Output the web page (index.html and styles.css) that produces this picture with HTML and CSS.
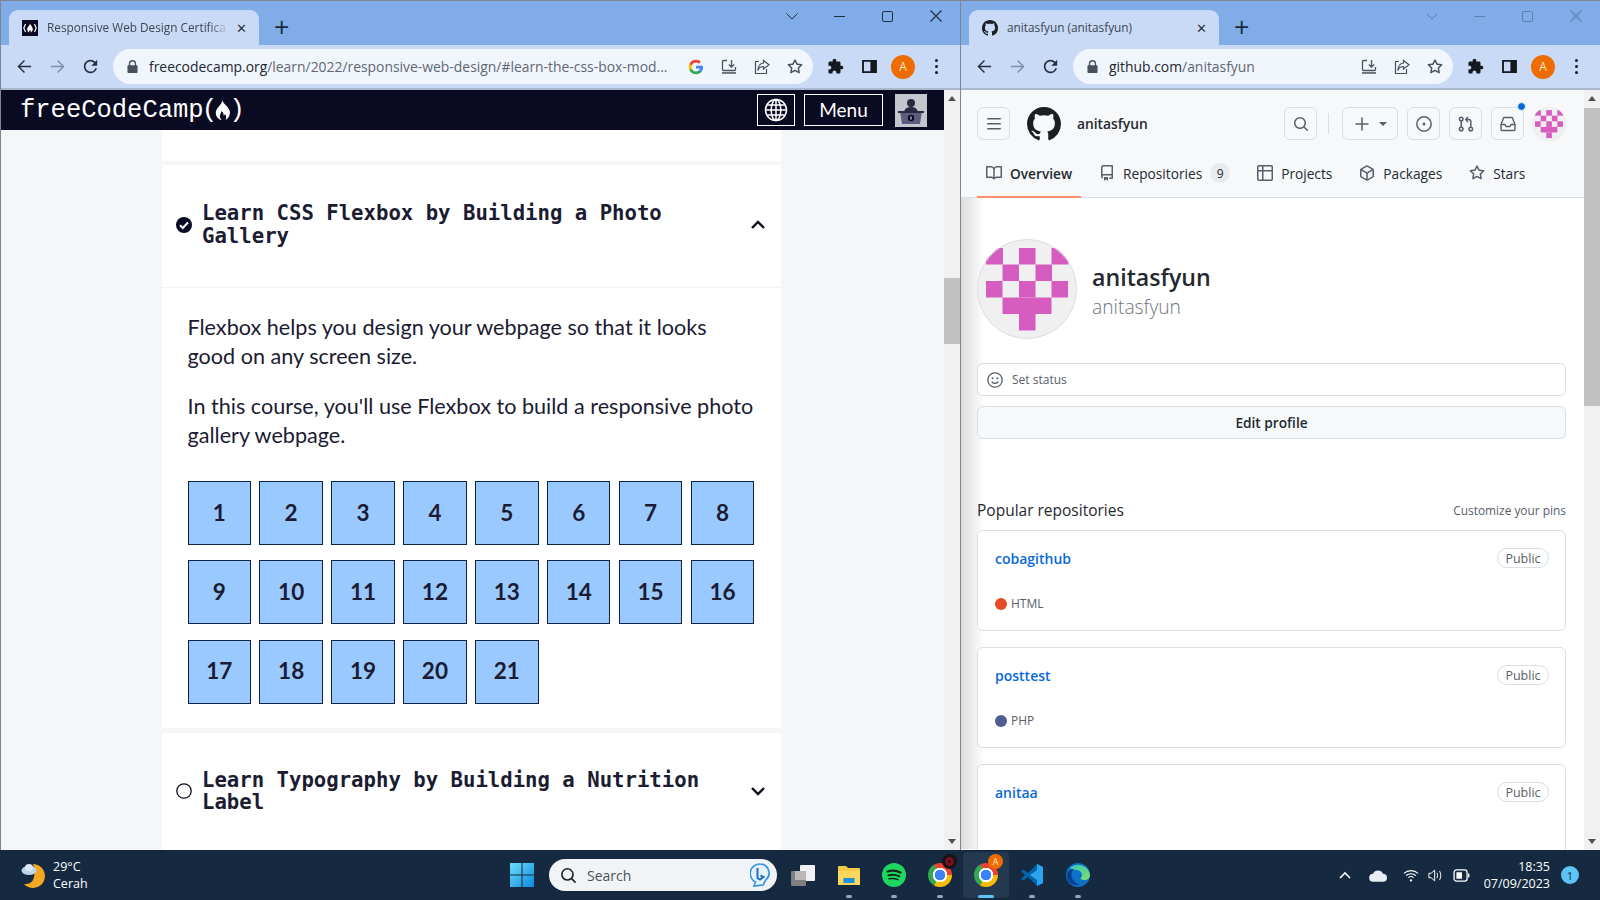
FILE: index.html
```html
<!DOCTYPE html>
<html>
<head>
    <title>Two browser windows</title>
    <link rel="stylesheet" href="styles.css">
</head>
<body>
    <!-- shared icons -->
    <svg class="sprites">
        <symbol id="i-github" viewBox="0 0 16 16"><path fill="currentColor" d="M8 0c4.42 0 8 3.58 8 8a8.013 8.013 0 0 1-5.45 7.59c-.4.08-.55-.17-.55-.38 0-.27.01-1.13.01-2.2 0-.75-.25-1.23-.54-1.48 1.78-.2 3.65-.88 3.65-3.95 0-.88-.31-1.59-.82-2.15.08-.2.36-1.02-.08-2.12 0 0-.67-.22-2.2.82-.64-.18-1.32-.27-2-.27-.68 0-1.36.09-2 .27-1.53-1.03-2.2-.82-2.2-.82-.44 1.1-.16 1.92-.08 2.12-.51.56-.82 1.28-.82 2.15 0 3.06 1.86 3.75 3.64 3.95-.23.2-.44.55-.51 1.07-.46.21-1.61.55-2.33-.66-.15-.24-.6-.83-1.23-.82-.67.01-.27.38.01.53.34.19.73.9.82 1.13.16.45.68 1.31 2.69.94 0 .67.01 1.3.01 1.49 0 .21-.15.45-.55.38A7.995 7.995 0 0 1 0 8c0-4.42 3.58-8 8-8Z"/></symbol>
        <symbol id="i-book" viewBox="0 0 16 16"><path fill="currentColor" d="M0 1.75A.75.75 0 0 1 .75 1h4.253c1.227 0 2.317.59 3 1.501A3.743 3.743 0 0 1 11.006 1h4.245a.75.75 0 0 1 .75.75v10.5a.75.75 0 0 1-.75.75h-4.507a2.25 2.25 0 0 0-1.591.659l-.622.621a.75.75 0 0 1-1.06 0l-.622-.621A2.25 2.25 0 0 0 5.258 13H.75a.75.75 0 0 1-.75-.75Zm7.251 10.324.004-5.073-.002-2.253A2.25 2.25 0 0 0 5.003 2.5H1.5v9h3.757a3.75 3.75 0 0 1 1.994.574ZM8.755 4.75l-.004 7.322a3.752 3.752 0 0 1 1.992-.572H14.5v-9h-3.495a2.25 2.25 0 0 0-2.25 2.25Z"/></symbol>
        <symbol id="i-repo" viewBox="0 0 16 16"><path fill="currentColor" d="M2 2.5A2.5 2.5 0 0 1 4.5 0h8.75a.75.75 0 0 1 .75.75v12.5a.75.75 0 0 1-.75.75h-2.5a.75.75 0 0 1 0-1.5h1.75v-2h-8a1 1 0 0 0-.714 1.7.75.75 0 1 1-1.072 1.05A2.495 2.495 0 0 1 2 11.5Zm10.5-1h-8a1 1 0 0 0-1 1v6.708A2.486 2.486 0 0 1 4.5 9h8ZM5 12.25a.25.25 0 0 1 .25-.25h3.5a.25.25 0 0 1 .25.25v3.25a.25.25 0 0 1-.4.2l-1.45-1.087a.249.249 0 0 0-.3 0L5.4 15.7a.25.25 0 0 1-.4-.2Z"/></symbol>
        <symbol id="i-table" viewBox="0 0 16 16"><path fill="currentColor" d="M0 1.75C0 .784.784 0 1.75 0h12.5C15.216 0 16 .784 16 1.75v12.5A1.75 1.75 0 0 1 14.25 16H1.75A1.75 1.75 0 0 1 0 14.25ZM6.5 6.5v8h7.75a.25.25 0 0 0 .25-.25V6.5Zm8-1.5V1.75a.25.25 0 0 0-.25-.25H6.5V5Zm-13 1.5v7.75c0 .138.112.25.25.25H5v-8ZM5 5V1.5H1.75a.25.25 0 0 0-.25.25V5Z"/></symbol>
        <symbol id="i-package" viewBox="0 0 16 16"><path fill="currentColor" d="m8.878.392 5.25 3.045c.54.314.872.89.872 1.514v6.098a1.75 1.75 0 0 1-.872 1.514l-5.25 3.045a1.75 1.75 0 0 1-1.756 0l-5.25-3.045A1.75 1.75 0 0 1 1 11.049V4.951c0-.624.332-1.201.872-1.514L7.122.392a1.75 1.75 0 0 1 1.756 0ZM7.875 1.69l-4.63 2.685L8 7.133l4.755-2.758-4.63-2.685a.248.248 0 0 0-.25 0ZM2.5 5.677v5.372c0 .09.047.171.125.216l4.625 2.683V8.432Zm6.25 8.271 4.625-2.683a.25.25 0 0 0 .125-.216V5.677L8.75 8.432Z"/></symbol>
        <symbol id="i-star" viewBox="0 0 16 16"><path fill="currentColor" d="M8 .25a.75.75 0 0 1 .673.418l1.882 3.815 4.21.612a.75.75 0 0 1 .416 1.279l-3.046 2.97.719 4.192a.751.751 0 0 1-1.088.791L8 12.347l-3.766 1.98a.75.75 0 0 1-1.088-.79l.72-4.194L.818 6.374a.75.75 0 0 1 .416-1.28l4.21-.611L7.327.668A.75.75 0 0 1 8 .25Zm0 2.445L6.615 5.5a.75.75 0 0 1-.564.41l-3.097.45 2.24 2.184a.75.75 0 0 1 .216.664l-.528 3.084 2.769-1.456a.75.75 0 0 1 .698 0l2.77 1.456-.53-3.084a.75.75 0 0 1 .216-.664l2.24-2.183-3.096-.45a.75.75 0 0 1-.564-.41L8 2.694Z"/></symbol>
        <symbol id="i-search" viewBox="0 0 16 16"><path fill="currentColor" d="M10.68 11.74a6 6 0 0 1-7.922-8.982 6 6 0 0 1 8.982 7.922l3.04 3.04a.749.749 0 0 1-.326 1.275.749.749 0 0 1-.734-.215ZM11.5 7a4.499 4.499 0 1 0-8.997 0A4.499 4.499 0 0 0 11.5 7Z"/></symbol>
        <symbol id="i-bars" viewBox="0 0 16 16"><path fill="currentColor" d="M1 2.75A.75.75 0 0 1 1.75 2h12.5a.75.75 0 0 1 0 1.5H1.75A.75.75 0 0 1 1 2.75Zm0 5A.75.75 0 0 1 1.75 7h12.5a.75.75 0 0 1 0 1.5H1.75A.75.75 0 0 1 1 7.75ZM1.75 12h12.5a.75.75 0 0 1 0 1.5H1.75a.75.75 0 0 1 0-1.5Z"/></symbol>
        <symbol id="i-issue" viewBox="0 0 16 16"><circle cx="8" cy="8" r="7.2" fill="none" stroke="currentColor" stroke-width="1.5"/><circle cx="8" cy="8" r="1.5" fill="currentColor"/></symbol>
        <symbol id="i-pr" viewBox="0 0 16 16"><g fill="none" stroke="currentColor" stroke-width="1.5"><circle cx="3.2" cy="3" r="1.8"/><circle cx="3.2" cy="13" r="1.8"/><circle cx="12.8" cy="13" r="1.8"/><path d="M3.2 5v6M12.8 11V5.5A2 2 0 0 0 10.8 3.5H8M10 1 7.8 3.5 10 6"/></g></symbol>
        <symbol id="i-inbox" viewBox="0 0 16 16"><g fill="none" stroke="currentColor" stroke-width="1.4" stroke-linejoin="round"><path d="M3.8 1.5h8.4L15 8.5v5a1 1 0 0 1-1 1H2a1 1 0 0 1-1-1v-5Z"/><path d="M1 8.5h4l1 2h4l1-2h4"/></g></symbol>
        <symbol id="i-smile" viewBox="0 0 16 16"><g fill="none" stroke="currentColor" stroke-width="1.3"><circle cx="8" cy="8" r="7.2"/><path d="M5 10c.8 1 1.8 1.400 3 1.400s2.200-.4 3-1.400" stroke-linecap="round"/></g><circle cx="5.6" cy="6.2" r="1" fill="currentColor"/><circle cx="10.4" cy="6.2" r="1" fill="currentColor"/></symbol>
        <symbol id="i-back" viewBox="0 0 16 16"><path fill="none" stroke="currentColor" stroke-width="1.5" d="M15 8H1.5M8 1.5 1.500 8 8 14.5"/></symbol>
        <symbol id="i-forward" viewBox="0 0 16 16"><path fill="none" stroke="currentColor" stroke-width="1.5" d="M1 8h13.500M8 1.500 14.500 8 8 14.500"/></symbol>
        <symbol id="i-reload" viewBox="3 3 18 18"><path fill="currentColor" d="M17.65 6.35A7.958 7.958 0 0 0 12 4c-4.42 0-7.99 3.58-7.99 8s3.57 8 7.99 8c3.730 0 6.840-2.550 7.730-6h-2.080A5.990 5.990 0 0 1 12 18c-3.310 0-6-2.690-6-6s2.690-6 6-6c1.660 0 3.140.69 4.220 1.780L13 11h7V4l-2.350 2.350z"/></symbol>
        <symbol id="i-lock" viewBox="0 0 12 14"><path fill="currentColor" d="M2 5.500V4a4 4 0 0 1 8 0v1.500h.5a1 1 0 0 1 1 1V13a1 1 0 0 1-1 1h-9a1 1 0 0 1-1-1V6.500a1 1 0 0 1 1-1Zm1.500 0h5V4a2.500 2.500 0 0 0-5 0Z"/></symbol>
        <symbol id="i-google" viewBox="0 0 24 24"><path fill="#4285F4" d="M22.56 12.25c0-.78-.07-1.53-.2-2.25H12v4.26h5.92c-.26 1.37-1.04 2.53-2.21 3.31v2.77h3.57c2.08-1.92 3.28-4.74 3.28-8.09z"/><path fill="#34A853" d="M12 23c2.97 0 5.46-.98 7.28-2.66l-3.57-2.77c-.98.66-2.23 1.06-3.71 1.06-2.86 0-5.29-1.93-6.16-4.53H2.18v2.84C3.99 20.53 7.7 23 12 23z"/><path fill="#FBBC05" d="M5.84 14.09c-.22-.66-.35-1.36-.35-2.09s.13-1.43.35-2.09V7.07H2.18C1.43 8.55 1 10.22 1 12s.43 3.45 1.18 4.93l2.85-2.22.81-.62z"/><path fill="#EA4335" d="M12 5.38c1.62 0 3.06.56 4.21 1.64l3.15-3.15C17.45 2.09 14.97 1 12 1 7.7 1 3.99 3.47 2.18 7.07l3.66 2.84c.87-2.6 3.3-4.53 6.16-4.53z"/></symbol>
        <symbol id="i-install" viewBox="0 0 16 16"><g fill="none" stroke="currentColor" stroke-width="1.3"><path d="M6 1.500H2.500a1 1 0 0 0-1 1v8a1 1 0 0 0 1 1h11a1 1 0 0 0 1-1V8M10.500 1v7M7.800 5.500l2.700 2.700 2.700-2.700"/></g><rect x="1" y="13.2" width="14" height="1.5" fill="currentColor"/></symbol>
        <symbol id="i-share" viewBox="0 0 16 16"><path fill="none" stroke="currentColor" stroke-width="1.2" d="M5 2.500H1.500v12h11V10M9.500 1.500 15 5.800l-5.500 4.200V7.500C6.500 7.500 4.800 9 3.800 11.500 4 7.500 6 4.500 9.500 4Z"/></symbol>
        <symbol id="i-puzzle" viewBox="0 0 24 24"><path fill="currentColor" d="M20.5 11H19V7c0-1.100-.9-2-2-2h-4V3.500C13 2.120 11.880 1 10.500 1S8 2.120 8 3.500V5H4c-1.100 0-1.990.9-1.990 2v3.800H3.500c1.490 0 2.700 1.210 2.700 2.700s-1.210 2.700-2.700 2.700H2V20c0 1.100.9 2 2 2h3.800v-1.500c0-1.490 1.210-2.700 2.700-2.700 1.490 0 2.700 1.210 2.700 2.700V22H17c1.100 0 2-.9 2-2v-4h1.500c1.380 0 2.500-1.120 2.500-2.500S21.880 11 20.500 11z"/></symbol>
        <symbol id="i-sidebar" viewBox="0 0 16 14"><path fill="currentColor" d="M0 0h16v14H0Zm2 2v10h7V2Z" fill-rule="evenodd"/></symbol>
        <symbol id="i-flame" viewBox="0 0 20 26"><path fill="currentColor" d="M9 0c1 5 8 8 9.500 14 .8 4-1.500 9-5.500 11 1.500-2.500 1.200-5.500-.5-7.500-.3 1.500-1 2-1.800 2.200.5-2.500-.7-5-2.700-6.200.3 2.500-3 5-1.500 8.500.4 1 1 2 1.800 3C3.500 24 .8 20 1 15.500 1.300 9.500 8.500 7 9 0Z"/></symbol>
        <symbol id="i-fcc" viewBox="0 0 16 16"><rect width="16" height="16" fill="#0a0a23"/><path fill="none" stroke="#fff" stroke-width="1.2" d="M3.500 4 1.800 8l1.700 4M12.500 4l1.700 4-1.700 4"/><path fill="#fff" d="M8 3.500c.4 2 2.800 3 2.800 5.700 0 1.500-1 2.800-2.300 3.300.5-1 .3-2-.5-2.800-.1 1-1.400 1.600-.8 2.800-1.300-.5-2-1.900-2-3.200 0-2.800 2.600-3.300 2.800-5.800Z"/></symbol>
    </svg>

    <div class="desktop">
        <!-- left browser window -->
        <section class="window window-left">
            <div class="tabstrip">
                <div class="tab">
                    <svg class="tab-favicon"><use href="#i-fcc"/></svg>
                    <span class="tab-title tab-title-fade">Responsive Web Design Certifica</span>
                    <span class="tab-close">&#10005;</span>
                </div>
                <span class="tab-new">+</span>
                <div class="window-controls">
                    <svg class="wc-caret" viewBox="0 0 12 7"><path d="M.5.5 6 6 11.500.5" fill="none" stroke="currentColor"/></svg>
                    <span class="wc-min"></span>
                    <span class="wc-max"></span>
                    <svg class="wc-close" viewBox="0 0 12 12"><path d="M.5.5l11 11M11.500.5l-11 11" fill="none" stroke="currentColor" stroke-width="1.1"/></svg>
                </div>
            </div>
            <div class="toolbar">
                <svg class="nav-icon"><use href="#i-back"/></svg>
                <svg class="nav-icon nav-off"><use href="#i-forward"/></svg>
                <svg class="nav-icon"><use href="#i-reload"/></svg>
                <div class="omnibox">
                    <svg class="omni-lock"><use href="#i-lock"/></svg>
                    <span class="omni-url"><b>freecodecamp.org</b>/learn/2022/responsive-web-design/#learn-the-css-box-mod...</span>
                    <svg class="omni-icon"><use href="#i-google"/></svg>
                    <svg class="omni-icon"><use href="#i-install"/></svg>
                    <svg class="omni-icon"><use href="#i-share"/></svg>
                    <svg class="omni-icon"><use href="#i-star"/></svg>
                </div>
                <svg class="ext-icon"><use href="#i-puzzle"/></svg>
                <svg class="side-icon"><use href="#i-sidebar"/></svg>
                <span class="chrome-avatar">A</span>
                <span class="chrome-dots"><i></i><i></i><i></i></span>
            </div>
            <div class="viewport">
                <div class="fcc-page">
                    <header class="fcc-header">
                        <div class="fcc-logo">freeCodeCamp<span class="fcc-paren">(</span><svg class="fcc-flame"><use href="#i-flame"/></svg><span class="fcc-paren">)</span></div>
                        <button class="fcc-globe">
                            <svg viewBox="0 0 24 24"><g fill="none" stroke="#fff" stroke-width="1.5"><circle cx="12" cy="12" r="10.500"/><ellipse cx="12" cy="12" rx="4.800" ry="10.500"/><path d="M12 1.500v21M1.500 12h21M3 7h18M3 17h18"/></g></svg>
                        </button>
                        <button class="fcc-menu">Menu</button>
                        <div class="fcc-user">
                            <svg viewBox="0 0 32 33"><rect width="32" height="33" fill="#c5c5cd"/><circle cx="16" cy="9" r="4" fill="#2a2a40"/><path d="M9 19c0-4 3-6 7-6s7 2 7 6Z" fill="#2a2a40"/><path d="M5 17h22l-2 13H7Z" fill="#5c5c80"/><rect x="3" y="17" width="26" height="2" fill="#2a2a40"/><circle cx="16" cy="24" r="3.200" fill="#0a0a23"/><path d="M16 22.500v3" stroke="#fff"/></svg>
                        </div>
                    </header>
                    <main class="fcc-main">
                        <div class="block-stub"></div>
                        <div class="block">
                            <div class="block-head">
                                <svg class="block-check" viewBox="0 0 16 16"><circle cx="8" cy="8" r="8" fill="#0a0a23"/><path d="M4 8.300l2.800 2.700L12 5.500" fill="none" stroke="#fff" stroke-width="2"/></svg>
                                <h3 class="block-title">Learn CSS Flexbox by Building a Photo Gallery</h3>
                                <svg class="block-chevron" viewBox="0 0 14 9"><path d="M1 8l6-6 6 6" fill="none" stroke="#0a0a23" stroke-width="2.400"/></svg>
                            </div>
                            <div class="block-body">
                                <p>Flexbox helps you design your webpage so that it looks good on any screen size.</p>
                                <p>In this course, you'll use Flexbox to build a responsive photo gallery webpage.</p>
                                <div class="step-grid">
                                    <a class="step">1</a><a class="step">2</a><a class="step">3</a><a class="step">4</a><a class="step">5</a><a class="step">6</a><a class="step">7</a><a class="step">8</a>
                                    <a class="step">9</a><a class="step">10</a><a class="step">11</a><a class="step">12</a><a class="step">13</a><a class="step">14</a><a class="step">15</a><a class="step">16</a>
                                    <a class="step">17</a><a class="step">18</a><a class="step">19</a><a class="step">20</a><a class="step">21</a>
                                </div>
                            </div>
                        </div>
                        <div class="block">
                            <div class="block-head block-head-next">
                                <svg class="block-check" viewBox="0 0 16 16"><circle cx="8" cy="8" r="7.200" fill="none" stroke="#0a0a23" stroke-width="1.300"/></svg>
                                <h3 class="block-title">Learn Typography by Building a Nutrition Label</h3>
                                <svg class="block-chevron" viewBox="0 0 14 9"><path d="M1 1l6 6 6-6" fill="none" stroke="#0a0a23" stroke-width="2.400"/></svg>
                            </div>
                        </div>
                    </main>
                </div>
                <div class="scrollbar">
                    <span class="sb-up"></span>
                    <span class="sb-thumb sb-thumb-left"></span>
                    <span class="sb-down"></span>
                </div>
            </div>
        </section>

        <!-- right browser window -->
        <section class="window window-right">
            <div class="tabstrip">
                <div class="tab">
                    <svg class="tab-favicon tab-favicon-gh"><use href="#i-github"/></svg>
                    <span class="tab-title">anitasfyun (anitasfyun)</span>
                    <span class="tab-close">&#10005;</span>
                </div>
                <span class="tab-new">+</span>
                <div class="window-controls window-controls-off">
                    <svg class="wc-caret" viewBox="0 0 12 7"><path d="M.5.5 6 6 11.500.5" fill="none" stroke="currentColor"/></svg>
                    <span class="wc-min"></span>
                    <span class="wc-max"></span>
                    <svg class="wc-close" viewBox="0 0 12 12"><path d="M.5.5l11 11M11.500.5l-11 11" fill="none" stroke="currentColor" stroke-width="1.1"/></svg>
                </div>
            </div>
            <div class="toolbar">
                <svg class="nav-icon"><use href="#i-back"/></svg>
                <svg class="nav-icon nav-off"><use href="#i-forward"/></svg>
                <svg class="nav-icon"><use href="#i-reload"/></svg>
                <div class="omnibox">
                    <svg class="omni-lock"><use href="#i-lock"/></svg>
                    <span class="omni-url"><b>github.com</b>/anitasfyun</span>
                    <svg class="omni-icon"><use href="#i-install"/></svg>
                    <svg class="omni-icon"><use href="#i-share"/></svg>
                    <svg class="omni-icon"><use href="#i-star"/></svg>
                </div>
                <svg class="ext-icon"><use href="#i-puzzle"/></svg>
                <svg class="side-icon"><use href="#i-sidebar"/></svg>
                <span class="chrome-avatar">A</span>
                <span class="chrome-dots"><i></i><i></i><i></i></span>
            </div>
            <div class="viewport">
                <div class="gh-page">
                    <header class="gh-top">
                        <div class="gh-bar">
                            <span class="gh-btn gh-btn-first"><svg><use href="#i-bars"/></svg></span>
                            <svg class="gh-mark"><use href="#i-github"/></svg>
                            <span class="gh-crumb">anitasfyun</span>
                            <span class="gh-btn gh-btn-search"><svg><use href="#i-search"/></svg></span>
                            <span class="gh-sep"></span>
                            <span class="gh-btn gh-btn-plus">
                                <svg viewBox="0 0 16 16"><path d="M8 1.500v13M1.500 8h13" stroke="currentColor" stroke-width="1.5"/></svg>
                                <i class="gh-caret"></i>
                            </span>
                            <span class="gh-btn"><svg><use href="#i-issue"/></svg></span>
                            <span class="gh-btn"><svg><use href="#i-pr"/></svg></span>
                            <span class="gh-btn gh-btn-inbox"><svg><use href="#i-inbox"/></svg><i class="gh-unread"></i></span>
                            <svg class="gh-mini-avatar" viewBox="0 0 100 100"><use href="#avatar-art"/></svg>
                        </div>
                        <nav class="gh-nav">
                            <a class="gh-tab gh-tab-on"><svg><use href="#i-book"/></svg>Overview</a>
                            <a class="gh-tab"><svg><use href="#i-repo"/></svg>Repositories<span class="gh-count">9</span></a>
                            <a class="gh-tab"><svg><use href="#i-table"/></svg>Projects</a>
                            <a class="gh-tab"><svg><use href="#i-package"/></svg>Packages</a>
                            <a class="gh-tab"><svg><use href="#i-star"/></svg>Stars</a>
                        </nav>
                    </header>
                    <div class="gh-body">
                        <div class="gh-profile">
                            <svg class="gh-avatar" viewBox="0 0 100 100">
                                <g id="avatar-art">
                                    <clipPath id="avatar-clip"><circle cx="50" cy="50" r="50"/></clipPath>
                                    <circle cx="50" cy="50" r="49.5" fill="#f0f0f0"/>
                                    <g clip-path="url(#avatar-clip)" fill="#d65cbf">
                                        <rect x="9" y="9" width="17" height="16.5"/><rect x="42" y="9" width="16.5" height="16.5"/><rect x="74.500" y="9" width="17" height="16.5"/>
                                        <rect x="25.500" y="25.500" width="16.5" height="16.5"/><rect x="58.500" y="25.500" width="16.5" height="16.5"/>
                                        <rect x="9" y="42" width="16.5" height="16.5"/><rect x="42" y="42" width="16.5" height="16.5"/><rect x="74.500" y="42" width="16.5" height="16.5"/>
                                        <rect x="25.500" y="58.500" width="49" height="16.5"/>
                                        <rect x="42" y="75" width="16.5" height="16.5"/>
                                    </g>
                                    <circle cx="50" cy="50" r="49.5" fill="none" stroke="#d8dee4"/>
                                </g>
                            </svg>
                            <div class="gh-names">
                                <div class="gh-name">anitasfyun</div>
                                <div class="gh-login">anitasfyun</div>
                            </div>
                        </div>
                        <div class="gh-status"><svg><use href="#i-smile"/></svg>Set status</div>
                        <div class="gh-edit">Edit profile</div>
                        <div class="gh-pop-head">
                            <h2>Popular repositories</h2>
                            <a>Customize your pins</a>
                        </div>
                        <div class="repo-list">
                            <div class="repo">
                                <div class="repo-top"><a class="repo-name">cobagithub</a><span class="repo-pill">Public</span></div>
                                <div class="repo-lang"><i class="lang-dot lang-html"></i>HTML</div>
                            </div>
                            <div class="repo">
                                <div class="repo-top"><a class="repo-name">posttest</a><span class="repo-pill">Public</span></div>
                                <div class="repo-lang"><i class="lang-dot lang-php"></i>PHP</div>
                            </div>
                            <div class="repo">
                                <div class="repo-top"><a class="repo-name">anitaa</a><span class="repo-pill">Public</span></div>
                            </div>
                        </div>
                    </div>
                </div>
                <div class="scrollbar">
                    <span class="sb-up"></span>
                    <span class="sb-thumb sb-thumb-right"></span>
                    <span class="sb-down"></span>
                </div>
            </div>
        </section>
    </div>

    <!-- taskbar -->
    <footer class="taskbar">
        <div class="tb-weather">
            <svg viewBox="0 0 24 26"><path d="M12 2a12 12 0 1 1-9 20c8 1 13-5 9-20Z" fill="#f5a623"/><ellipse cx="8" cy="8.500" rx="7.500" ry="4.500" fill="#b9d4ee"/><ellipse cx="8" cy="5.500" rx="4" ry="3.500" fill="#dbe9f7"/></svg>
            <div class="tb-weather-text"><span>29°C</span><span>Cerah</span></div>
        </div>
        <svg class="tb-win" viewBox="0 0 24 24">
            <defs><linearGradient id="win-g" x1="0" y1="0" x2="1" y2="1"><stop offset="0" stop-color="#6ce0fb"/><stop offset="1" stop-color="#0f86dd"/></linearGradient></defs>
            <path fill="url(#win-g)" d="M0 0h11.500v11.500H0Zm12.500 0H24v11.500H12.500ZM0 12.500h11.500V24H0Zm12.500 0H24V24H12.500Z"/>
        </svg>
        <div class="tb-search">
            <svg class="tb-search-q" viewBox="0 0 16 16"><use href="#i-search"/></svg>
            <span>Search</span>
            <svg class="tb-bing" viewBox="0 0 20 24"><path d="M10 1a9 9 0 0 1 6 15.700L13 22l-9 1 1.500-4A9.500 9.500 0 0 1 10 1Z" fill="#e6f2fc" stroke="#2f8fe0" stroke-width="1.6"/><path d="M7.500 5v10l2.500 1.500 3.500-2.500-3-1.500" fill="none" stroke="#1d6fc4" stroke-width="2"/></svg>
        </div>
        <div class="tb-apps">
            <span class="tb-app">
                <svg viewBox="0 0 24 24"><rect x="9" y="2" width="15" height="16" rx="1" fill="#f0f0f0"/><rect x="0" y="8" width="15" height="15" rx="1" fill="#7f7f7f"/><rect x="4" y="8" width="11" height="9" fill="#b9b9b9"/></svg>
            </span>
            <span class="tb-app tb-app-run">
                <svg viewBox="0 0 24 24"><path d="M1 4a1 1 0 0 1 1-1h7l2 2h11a1 1 0 0 1 1 1v16H1Z" fill="#f6c945"/><rect x="1" y="8" width="22" height="14" fill="#fbd75b"/><rect x="6.500" y="15" width="11" height="5" fill="#1b8fe0"/></svg>
            </span>
            <span class="tb-app tb-app-run">
                <svg viewBox="0 0 24 24"><circle cx="12" cy="12" r="12" fill="#1ed760"/><g fill="none" stroke="#13281b" stroke-linecap="round"><path d="M5.500 8.500c4.500-1.300 9-1 13 1" stroke-width="2.200"/><path d="M6.300 12.300c4-1 7.500-.7 11 1" stroke-width="1.800"/><path d="M7 15.800c3.300-.7 6.300-.5 9 .9" stroke-width="1.500"/></g></svg>
            </span>
            <span class="tb-app tb-app-run">
                <span class="chrome-logo"></span>
                <i class="tb-badge tb-badge-dark"></i>
            </span>
            <span class="tb-app tb-app-active">
                <span class="chrome-logo"></span>
                <i class="tb-badge tb-badge-a">A</i>
            </span>
            <span class="tb-app tb-app-run">
                <svg viewBox="0 0 24 24"><path fill="#0065a9" d="M17 1 8 10 3.500 6.500 1 8l4 4-4 4 2.500 1.500L8 14l9 9 6-3V4Z"/><path fill="#2aa4f0" d="M17 1l6 3v16l-6 3Zm0 6L10 12l7 5Z" fill-rule="evenodd"/></svg>
            </span>
            <span class="tb-app tb-app-run">
                <svg viewBox="0 0 24 24"><defs><linearGradient id="edge-g" x1="0" y1="0" x2="1" y2="1"><stop offset="0" stop-color="#38c7c0"/><stop offset="1" stop-color="#7fdc6a"/></linearGradient></defs><circle cx="12" cy="12" r="12" fill="#0c72c7"/><path fill="url(#edge-g)" d="M4 5a12 12 0 0 1 20 7c0 3-2.500 5-5.500 5-2 0-4-.8-4-1.800 0-.7 1.500-1 1.500-3.200 0-3-3-5-6-5C7 7 5 6 4 5Z"/><path fill="#0a3f8c" d="M1 12C1 7.500 5 6 8 6c-2 1.500-3 4-2.500 7 .6 4 4 7.500 8 8.500C7 24 1 19 1 12Z"/></svg>
            </span>
        </div>
        <div class="tb-tray">
            <svg class="tray-caret" viewBox="0 0 12 8"><path d="M1 7l5-5 5 5" fill="none" stroke="#fff" stroke-width="1.6"/></svg>
            <svg class="tray-cloud" viewBox="0 0 20 14"><path d="M5 14a4.500 4.500 0 0 1-.5-9A6 6 0 0 1 15.500 5 4.500 4.500 0 0 1 15.500 14Z" fill="#e8eef4"/></svg>
            <svg class="tray-wifi" viewBox="0 0 18 16"><g fill="none" stroke="#fff" stroke-width="1.2"><path d="M1 5.500c4.500-4 11.500-4 16 0M3.500 8c3-2.700 8-2.700 11 0M6 10.500c1.700-1.500 4.300-1.500 6 0"/></g><circle cx="9" cy="13.500" r="1.300" fill="#fff"/></svg>
            <svg class="tray-sound" viewBox="0 0 18 16"><g fill="none" stroke="#fff" stroke-width="1.1"><path d="M1 5.500h2.500L7.500 2v12l-4-3.500H1Z"/><path d="M10 5c1 1.800 1 4.200 0 6M13 3c1.800 3 1.800 7 0 10"/></g></svg>
            <svg class="tray-battery" viewBox="0 0 18 14"><rect x="1" y="1" width="14" height="12" rx="2.500" fill="none" stroke="#fff" stroke-width="1.4"/><rect x="3.500" y="3.500" width="6" height="7" fill="#fff"/><rect x="16" y="5" width="1.5" height="4" fill="#fff"/></svg>
            <div class="tray-clock"><span>18:35</span><span>07/09/2023</span></div>
            <span class="tray-notif">1</span>
        </div>
    </footer>
</body>
</html>
```
FILE: styles.css
```css
/* Page frame */
* {
    box-sizing: border-box;
}

html, body {
    margin: 0;
    height: 900px;
    overflow: hidden;
}

body {
    font-family: "Open Sans", sans-serif;
    background-color: #152a40;
}

.sprites {
    display: none;
}

.desktop {
    display: flex;
    height: 850px;
}

.window {
    display: flex;
    flex-direction: column;
    border-top: 1px solid #7d8794;
    border-left: 1px solid #7d8794;
    height: 850px;
}

.window-left {
    width: 960px;
}

.window-right {
    width: 640px;
}

/* Browser tab strip */
.tabstrip {
    display: flex;
    height: 44px;
    background-color: #80ace8;
    padding-left: 8px;
    flex-shrink: 0;
}

.tab {
    display: flex;
    align-items: center;
    width: 250px;
    height: 35px;
    margin-top: 9px;
    padding-left: 13px;
    background-color: #c8daf6;
    border-radius: 9px 9px 0 0;
}

.tab-favicon {
    width: 16px;
    height: 16px;
    flex-shrink: 0;
}

.tab-favicon-gh {
    color: #1b1f24;
}

.tab-title {
    width: 181px;
    margin-left: 9px;
    margin-bottom: 2px;
    font-size: 11.8px;
    color: #3d4650;
    white-space: nowrap;
    overflow: hidden;
}

.tab-title-fade {
    -webkit-mask-image: linear-gradient(to right, #000 90%, transparent);
    mask-image: linear-gradient(to right, #000 90%, transparent);
}

.tab-close {
    margin-left: 8px;
    font-size: 13px;
    color: #2b3440;
}

.tab-new {
    width: 46px;
    padding-left: 15px;
    padding-top: 7px;
    font-size: 27px;
    line-height: 38px;
    font-weight: 400;
    color: #1c2a3c;
}

.window-controls {
    display: flex;
    align-items: center;
    width: 184px;
    height: 30px;
    margin-left: auto;
    padding-left: 10px;
    color: #1f2d3f;
}

.window-controls-off {
    color: #5d7fae;
}

.wc-caret {
    width: 12px;
    height: 7px;
    margin-right: 36px;
}

.wc-min {
    width: 11px;
    height: 1px;
    margin-right: 37px;
    background-color: currentColor;
}

.wc-max {
    width: 11px;
    height: 11px;
    margin-right: 37px;
    border: 1px solid currentColor;
    border-radius: 2px;
}

.wc-close {
    width: 12px;
    height: 12px;
}

/* Browser toolbar */
.toolbar {
    display: flex;
    align-items: center;
    height: 45px;
    padding-left: 16px;
    background-color: #c8daf6;
    border-bottom: 2px solid #a9b8cd;
    flex-shrink: 0;
}

.nav-icon {
    width: 15px;
    height: 15px;
    margin-right: 18px;
    color: #26303c;
    flex-shrink: 0;
}

.nav-off {
    color: #7f8ea3;
}

.omnibox {
    display: flex;
    align-items: center;
    flex: 1;
    min-width: 0;
    height: 35px;
    margin-left: -3px;
    padding-left: 14px;
    padding-right: 10px;
    background-color: #f1f5fc;
    border-radius: 18px;
}

.omni-lock {
    width: 11px;
    height: 13px;
    color: #4a5059;
    flex-shrink: 0;
}

.omni-url {
    margin-left: 11px;
    font-size: 13.9px;
    color: #5f6772;
    white-space: nowrap;
    flex: 1;
    min-width: 0;
}

.omni-url b {
    font-weight: 400;
    color: #202630;
}

.omni-icon {
    width: 16px;
    height: 16px;
    margin-left: 17px;
    color: #4b535e;
    flex-shrink: 0;
}

.ext-icon {
    width: 17px;
    height: 17px;
    margin-left: 14px;
    color: #14191f;
    flex-shrink: 0;
}

.side-icon {
    width: 15px;
    height: 13px;
    margin-left: 18px;
    color: #14191f;
    flex-shrink: 0;
}

.chrome-avatar {
    display: flex;
    align-items: center;
    justify-content: center;
    width: 24px;
    height: 24px;
    margin-left: 14px;
    border-radius: 50%;
    background-color: #ef6c00;
    color: #ffe6d0;
    font-size: 12px;
    flex-shrink: 0;
}

.chrome-dots {
    display: flex;
    flex-direction: column;
    gap: 3px;
    margin-left: 20px;
    margin-right: 22px;
}

.chrome-dots i {
    width: 3px;
    height: 3px;
    border-radius: 50%;
    background-color: #14191f;
}

/* Page area plus scrollbar */
.viewport {
    display: flex;
    flex: 1;
    min-height: 0;
    overflow: hidden;
}

.scrollbar {
    display: flex;
    flex-direction: column;
    align-items: center;
    width: 16px;
    background-color: #f1f1f1;
    flex-shrink: 0;
}

.sb-up, .sb-down {
    width: 0;
    height: 0;
    border-left: 4px solid transparent;
    border-right: 4px solid transparent;
}

.sb-up {
    margin-top: 6px;
    border-bottom: 5px solid #505050;
}

.sb-down {
    margin-top: auto;
    margin-bottom: 6px;
    border-top: 5px solid #505050;
}

.sb-thumb {
    width: 16px;
    background-color: #c1c1c1;
}

.sb-thumb-left {
    height: 66px;
    margin-top: 177px;
}

.sb-thumb-right {
    height: 298px;
    margin-top: 7px;
}

/* freeCodeCamp page */
.fcc-page {
    flex: 1;
    background-color: #f5f6f7;
    min-width: 0;
}

.fcc-header {
    display: flex;
    align-items: center;
    height: 40px;
    padding-left: 19px;
    background-color: #0a0a23;
    color: #fff;
}

.fcc-logo {
    display: flex;
    align-items: center;
    flex: 1;
    font-family: "Liberation Mono", monospace;
    font-size: 25.5px;
}

.fcc-paren {
    margin: 0 -2px;
    font-size: 26px;
}

.fcc-flame {
    width: 16px;
    height: 23px;
    color: #fff;
}

.fcc-globe {
    display: flex;
    align-items: center;
    justify-content: center;
    width: 38px;
    height: 32px;
    padding: 0;
    background: none;
    border: 1px solid #fff;
}

.fcc-globe svg {
    width: 24px;
    height: 24px;
}

.fcc-menu {
    width: 79px;
    height: 32px;
    margin-left: 9px;
    padding: 0 0 2px;
    background: none;
    border: 1px solid #fff;
    color: #fff;
    font-family: "Lato", sans-serif;
    font-size: 19px;
}

.fcc-user {
    width: 32px;
    height: 33px;
    margin-left: 12px;
    margin-right: 17px;
}

.fcc-user svg {
    display: block;
    width: 32px;
    height: 33px;
}

.fcc-main {
    width: 619px;
    margin-left: 161px;
    font-family: "Lato", sans-serif;
    color: #0a0a23;
}

.block-stub {
    height: 31px;
    background-color: #fff;
    margin-bottom: 4px;
}

.block {
    background-color: #fff;
    margin-bottom: 5px;
}

.block-head {
    display: flex;
    align-items: center;
    height: 123px;
    padding-left: 14px;
    padding-bottom: 3px;
    border-bottom: 1px solid #f2f3f4;
}

.block-head-next {
    height: 117px;
    padding-bottom: 0;
    border-bottom: none;
}

.block-check {
    width: 16px;
    height: 16px;
    flex-shrink: 0;
}

.block-title {
    width: 530px;
    margin: 0 0 0 10px;
    font-family: "DejaVu Sans Mono", monospace;
    font-size: 20.65px;
    line-height: 22.5px;
    font-weight: 700;
    color: #1b1b32;
}

.block-chevron {
    width: 14px;
    height: 9px;
    margin-left: 19px;
    flex-shrink: 0;
}

.block-body {
    padding: 25px 26px 24px 25.5px;
    font-size: 21.6px;
    line-height: 28.5px;
    color: #1b1b32;
}

.block-body p {
    margin: 0 0 22px;
}

.step-grid {
    display: grid;
    grid-template-columns: repeat(8, 63.5px);
    grid-auto-rows: 64px;
    column-gap: 8.4px;
    row-gap: 15.3px;
    margin-top: 32px;
}

.step {
    display: flex;
    align-items: center;
    justify-content: center;
    background-color: #99c9ff;
    border: 1px solid #0a2540;
    font-size: 22.5px;
    font-weight: 700;
    color: #1b1b32;
}

/* GitHub page */
.gh-page {
    flex: 1;
    min-width: 0;
    background-color: #fff;
}

.gh-top {
    height: 108px;
    background-color: #f6f8fa;
    border-bottom: 1px solid #d8dee4;
}

.gh-bar {
    display: flex;
    align-items: center;
    height: 67px;
    padding-left: 16px;
    color: #57606a;
}

.gh-btn {
    display: flex;
    align-items: center;
    justify-content: center;
    width: 33px;
    height: 33px;
    margin-left: 9px;
    border: 1px solid #d8dee4;
    border-radius: 6px;
    color: #57606a;
    position: relative;
}

.gh-btn svg {
    width: 16px;
    height: 16px;
}

.gh-btn-first {
    margin-left: 0;
}

.gh-btn-search {
    margin-left: auto;
}

.gh-btn-plus {
    width: 56px;
    gap: 9px;
}

.gh-sep {
    width: 1px;
    height: 21px;
    margin: 0 4px 0 11px;
    background-color: #d8dee4;
}

.gh-caret {
    width: 0;
    height: 0;
    border-left: 4px solid transparent;
    border-right: 4px solid transparent;
    border-top: 4px solid #57606a;
}

.gh-unread {
    position: absolute;
    top: -6px;
    right: -3px;
    width: 9px;
    height: 9px;
    border-radius: 50%;
    background-color: #0969da;
    border: 1px solid #f6f8fa;
}

.gh-mark {
    width: 34px;
    height: 34px;
    margin-left: 17px;
    color: #1b1f24;
}

.gh-crumb {
    margin-left: 16px;
    font-size: 13.8px;
    font-weight: 600;
    color: #24292f;
}

.gh-mini-avatar {
    width: 34px;
    height: 34px;
    margin-left: 8px;
    margin-right: 18px;
}

.gh-nav {
    display: flex;
    height: 41px;
    padding-left: 16px;
    gap: 9px;
}

.gh-tab {
    display: flex;
    align-items: center;
    gap: 8px;
    height: 41px;
    padding: 0 9px 7px;
    font-size: 13.7px;
    color: #24292f;
    border-bottom: 2px solid transparent;
}

.gh-tab svg {
    width: 16px;
    height: 16px;
    color: #57606a;
}

.gh-tab-on {
    font-weight: 600;
    border-bottom-color: #fd8c73;
}

.gh-count {
    display: flex;
    align-items: center;
    justify-content: center;
    width: 20px;
    height: 20px;
    border-radius: 10px;
    background-color: #e8ebef;
    font-size: 12px;
}

.gh-body {
    height: 651px;
    padding: 41px 18px 0 16px;
    background: linear-gradient(to right, #dcdcdc, #fff 24px);
}

.gh-profile {
    display: flex;
    align-items: center;
    gap: 15px;
}

.gh-avatar {
    width: 100px;
    height: 100px;
    flex-shrink: 0;
}

.gh-names {
    margin-top: 4px;
}

.gh-name {
    font-size: 23.2px;
    line-height: 30px;
    font-weight: 600;
    color: #24292f;
}

.gh-login {
    font-size: 19.3px;
    line-height: 29px;
    font-weight: 300;
    color: #6e7781;
}

.gh-status {
    display: flex;
    align-items: center;
    gap: 9px;
    height: 33px;
    margin-top: 24px;
    padding-left: 9px;
    background-color: #fff;
    border: 1px solid #d8dee4;
    border-radius: 6px;
    font-size: 12px;
    color: #57606a;
}

.gh-status svg {
    width: 16px;
    height: 16px;
}

.gh-edit {
    display: flex;
    align-items: center;
    justify-content: center;
    height: 33px;
    margin-top: 10px;
    background-color: #f6f8fa;
    border: 1px solid #d8dee4;
    border-radius: 6px;
    font-size: 13.7px;
    font-weight: 600;
    color: #24292f;
}

.gh-pop-head {
    display: flex;
    align-items: center;
    justify-content: space-between;
    height: 24px;
    margin-top: 59px;
    color: #24292f;
}

.gh-pop-head h2 {
    margin: 0;
    font-size: 15.5px;
    font-weight: 400;
}

.gh-pop-head a {
    font-size: 11.9px;
    color: #57606a;
}

.repo-list {
    display: flex;
    flex-direction: column;
    gap: 16px;
    margin-top: 8px;
}

.repo {
    height: 101px;
    padding: 17px 16px 0 17px;
    background-color: #fff;
    border: 1px solid #d8dee4;
    border-radius: 6px;
}

.repo-top {
    display: flex;
    align-items: center;
    justify-content: space-between;
    height: 20px;
}

.repo-name {
    font-size: 14px;
    font-weight: 600;
    color: #0969da;
}

.repo-pill {
    display: flex;
    align-items: center;
    justify-content: center;
    width: 52px;
    height: 20px;
    border: 1px solid #d8dee4;
    border-radius: 10px;
    font-size: 12.5px;
    font-weight: 500;
    color: #57606a;
}

.repo-lang {
    display: flex;
    align-items: center;
    gap: 4px;
    margin-top: 27px;
    font-size: 12px;
    color: #57606a;
}

.lang-dot {
    width: 12px;
    height: 12px;
    border-radius: 50%;
}

.lang-html {
    background-color: #e34c26;
}

.lang-php {
    background-color: #4f5d95;
}

/* Windows taskbar */
.taskbar {
    display: flex;
    align-items: center;
    height: 50px;
    background-color: #152a40;
    color: #fff;
}

.tb-weather {
    display: flex;
    align-items: center;
    width: 510px;
    padding-left: 21px;
}

.tb-weather svg {
    width: 24px;
    height: 26px;
}

.tb-weather-text {
    display: flex;
    flex-direction: column;
    margin-left: 8px;
    font-size: 12.5px;
    line-height: 17px;
}

.tb-win {
    width: 24px;
    height: 24px;
}

.tb-search {
    display: flex;
    align-items: center;
    width: 228px;
    height: 32px;
    margin-left: 15px;
    padding-left: 11px;
    background-color: #f1f4f7;
    border-radius: 16px;
    font-size: 14px;
    color: #4a5258;
}

.tb-search-q {
    width: 17px;
    height: 17px;
    color: #1c2228;
}

.tb-search span {
    margin-left: 10px;
}

.tb-bing {
    width: 20px;
    height: 24px;
    margin-left: auto;
    margin-right: 7px;
}

.tb-apps {
    display: flex;
    align-items: center;
    height: 50px;
    margin-left: 3px;
}

.tb-app {
    display: flex;
    align-items: center;
    justify-content: center;
    width: 45.8px;
    height: 46px;
    position: relative;
}

.tb-app svg {
    width: 24px;
    height: 24px;
}

.tb-app-run::after,
.tb-app-active::after {
    content: "";
    position: absolute;
    left: 50%;
    bottom: 0;
    width: 6px;
    height: 3px;
    margin-left: -3px;
    border-radius: 2px;
    background-color: #9aa5b1;
}

.tb-app-active {
    background-color: #24394f;
    border-radius: 4px;
}

.tb-app-active::after {
    width: 16px;
    margin-left: -8px;
    background-color: #5cc4f7;
}

.chrome-logo {
    display: block;
    width: 24px;
    height: 24px;
    border-radius: 50%;
    background:
        radial-gradient(circle, #3b82f6 0 5px, #fff 5.5px 7px, transparent 7.5px),
        conic-gradient(#ea4335 0 90deg, #fbbc05 90deg 210deg, #34a853 210deg 330deg, #ea4335 330deg);
}

.tb-badge {
    position: absolute;
    top: 2px;
    right: 6px;
    width: 15px;
    height: 15px;
    border-radius: 50%;
    font-style: normal;
}

.tb-badge-dark {
    background-color: #2a0f14;
    border: 3px solid #1a1216;
    box-shadow: inset 0 0 0 3px #7a1020;
}

.tb-badge-a {
    background-color: #ef6c00;
    color: #ffe6d0;
    font-size: 9px;
    line-height: 15px;
    text-align: center;
}

.tb-tray {
    display: flex;
    align-items: center;
    margin-left: auto;
}

.tray-caret {
    width: 12px;
    height: 8px;
}

.tray-cloud {
    width: 18px;
    height: 13px;
    margin-left: 18px;
}

.tray-wifi {
    width: 16px;
    height: 15px;
    margin-left: 16px;
}

.tray-sound {
    width: 16px;
    height: 15px;
    margin-left: 9px;
}

.tray-battery {
    width: 17px;
    height: 13px;
    margin-left: 9px;
}

.tray-clock {
    display: flex;
    flex-direction: column;
    align-items: flex-end;
    margin-left: 14px;
    font-size: 12.5px;
    line-height: 17.5px;
}

.tray-notif {
    display: flex;
    align-items: center;
    justify-content: center;
    width: 18px;
    height: 18px;
    margin-left: 11px;
    margin-right: 21px;
    border-radius: 50%;
    background-color: #5cc4f7;
    color: #10263c;
    font-size: 11px;
}
```
